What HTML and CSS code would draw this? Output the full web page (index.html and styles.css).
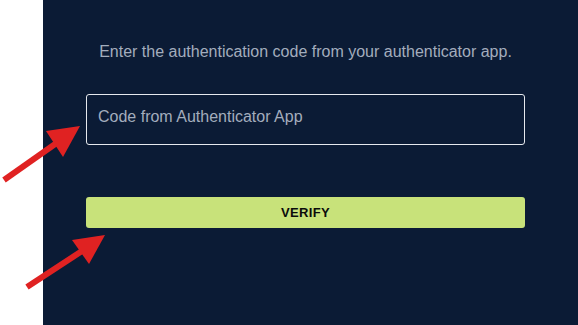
FILE: index.html
```html
<!DOCTYPE html>
<html lang="en">
<head>
    <meta charset="UTF-8">
    <title>Two-factor verification</title>
    <link rel="stylesheet" href="styles.css">
</head>
<body>
    <div class="page">
        <div class="gutter"></div>
        <div class="panel">
            <form class="verify-form">
                <p class="hint">Enter the authentication code from your authenticator app.</p>
                <input class="code-input" type="text" placeholder="Code from Authenticator App">
                <button class="verify-btn" type="button">VERIFY</button>
            </form>
        </div>
    </div>

    <!-- annotation arrows -->
    <svg class="arrows" width="578" height="325" viewBox="0 0 578 325">
        <line x1="4" y1="180" x2="58" y2="142" stroke="#e02222" stroke-width="6"/>
        <polygon points="80,126 46,131 63,157" fill="#e02222"/>
        <line x1="27" y1="287" x2="82" y2="251" stroke="#e02222" stroke-width="6"/>
        <polygon points="105,235 72,240 89,264" fill="#e02222"/>
    </svg>
</body>
</html>
```

FILE: styles.css
```css
body {
    margin: 0;
    width: 578px;
    height: 325px;
    overflow: hidden;
    background: #fff;
    font-family: Arial, "Liberation Sans", sans-serif;
    position: relative;
}

.page {
    display: flex;
    height: 100%;
}

.gutter {
    width: 43px;
    flex-shrink: 0;
    background: #fff;
}

.panel {
    flex: 1;
    background: #0b1b35;
    padding: 0 53px 0 43px;
}

.verify-form {
    display: flex;
    flex-direction: column;
    padding-top: 42px;
}

.hint {
    margin: 0;
    color: #a3adbd;
    font-size: 16px;
    line-height: 19px;
    text-align: center;
}

.code-input {
    margin-top: 33px;
    height: 51px;
    box-sizing: border-box;
    background: transparent;
    border: 1px solid #e6e9ee;
    border-radius: 3px;
    padding: 0 11px 6px;
    font-family: Arial, "Liberation Sans", sans-serif;
    font-size: 16px;
    color: #fff;
    outline: none;
}

.code-input::placeholder {
    color: #a3adbd;
}

.verify-btn {
    margin-top: 52px;
    height: 31px;
    border: none;
    border-radius: 3px;
    background: #c8e27a;
    color: #0b0b0b;
    font-family: Arial, "Liberation Sans", sans-serif;
    font-weight: bold;
    font-size: 13px;
    letter-spacing: 0.3px;
    padding: 0;
}

.arrows {
    position: absolute;
    top: 0;
    left: 0;
    pointer-events: none;
}
```
